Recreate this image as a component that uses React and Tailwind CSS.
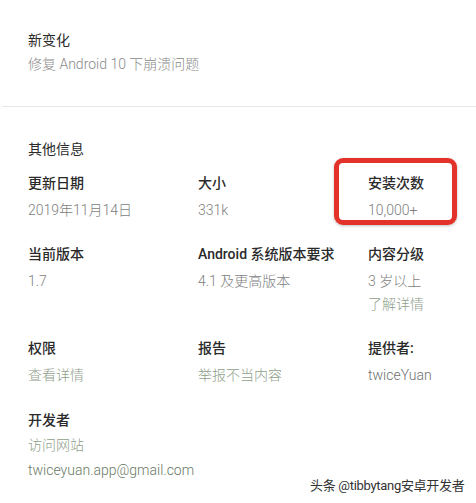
import React from "react";

const font = { fontFamily: '"Roboto", "Noto Sans CJK SC", sans-serif' };

function Cell({ label, value, extra, valueClass = "text-[#7e7e7e]" }) {
  return (
    <div className="flex flex-col">
      <div className="text-[14px] leading-5 font-medium text-[#2a2a2a]">{label}</div>
      <div className={`mt-[7px] text-[14px] leading-5 font-light ${valueClass}`}>{value}</div>
      {extra && <div className="mt-[3px] text-[14px] leading-5 font-light text-[#8fa08a]">{extra}</div>}
    </div>
  );
}

export default function App() {
  return (
    <div className="relative w-[476px] h-[503px] bg-white overflow-hidden" style={font}>
      <div className="pt-[30px] pb-[32px] px-[28px]">
        <div className="text-[14px] leading-5 text-[#2a2a2a]">新变化</div>
        <div className="mt-[4px] text-[14px] leading-5 font-light text-[#8a8a8a]">修复 Android 10 下崩溃问题</div>
      </div>
      <div className="h-px bg-[#e6e6e6] ml-[2px]" />
      <div className="pt-[32px] px-[28px]">
        <div className="text-[14px] leading-5 text-[#2a2a2a]">其他信息</div>
        <div className="mt-[14px] grid grid-cols-[170px_170px_1fr] gap-y-[24px]">
          <Cell label="更新日期" value="2019年11月14日" />
          <Cell label="大小" value="331k" />
          <Cell label="安装次数" value="10,000+" />
          <Cell label="当前版本" value="1.7" />
          <Cell label="Android 系统版本要求" value="4.1 及更高版本" />
          <Cell label="内容分级" value="3 岁以上" extra="了解详情" />
          <Cell label="权限" value="查看详情" valueClass="text-[#8fa08a]" />
          <Cell label="报告" value="举报不当内容" valueClass="text-[#8fa08a]" />
          <Cell label="提供者:" value="twiceYuan" valueClass="text-[#6f6f6f]" />
        </div>
        <div className="mt-[25px] flex flex-col">
          <div className="text-[14px] leading-5 font-medium text-[#2a2a2a]">开发者</div>
          <div className="mt-[5px] text-[14px] leading-5 font-light text-[#8fa08a]">访问网站</div>
          <div className="mt-[5px] text-[14px] leading-5 font-light text-[#6a7a66]">twiceyuan.app@gmail.com</div>
        </div>
      </div>
      <div className="absolute left-[334px] top-[158px] w-[123px] h-[67px] border-[5px] border-[#e2322a] rounded-[9px] shadow-[0_1px_3px_rgba(0,0,0,0.25)]" />
      <div className="absolute left-[310px] top-[476px] whitespace-nowrap text-[13px] leading-5 tracking-[-0.3px] text-[#333333] [text-shadow:0_0_2px_#ffffff]">
        头条 @tibbytang安卓开发者
      </div>
    </div>
  );
}
